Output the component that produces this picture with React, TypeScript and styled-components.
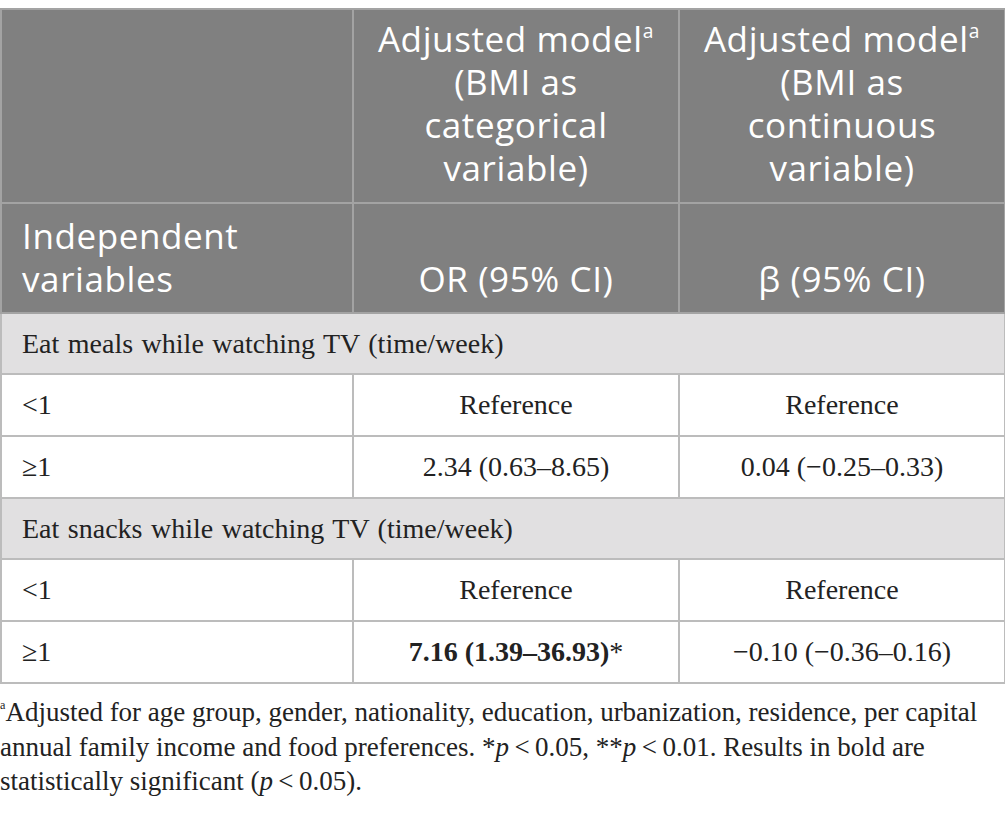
import styled, { createGlobalStyle } from 'styled-components';

const GlobalStyle = createGlobalStyle`
    body {
        margin: 0;
        padding-top: 8px;
        background: #ffffff;
    }
`

const Page = styled.div`
    width: 1005px;
`

const Table = styled.table`
    width: 1004px;
    border-collapse: collapse;
    table-layout: fixed;
`

const HeadCell = styled.th<{ $align?: string; $valign?: string; $height: number }>`
    height: ${p => p.$height}px;
    box-sizing: border-box;
    background: #808080;
    color: #ffffff;
    font-family: "Open Sans", "Liberation Sans", sans-serif;
    font-weight: 400;
    font-size: 35px;
    letter-spacing: 0.6px;
    line-height: 43px;
    text-align: ${p => p.$align || 'center'};
    vertical-align: ${p => p.$valign || 'middle'};
    padding: 6px 20px 12px 20px;
    border: 2px solid #a3a3a3;
`

const Sup = styled.sup`
    font-size: 0.55em;
    line-height: 0;
    vertical-align: 0.75em;
`

const SectionCell = styled.td`
    height: 61px;
    box-sizing: border-box;
    background: #e1e0e1;
    color: #222222;
    font-family: "Liberation Serif", serif;
    font-size: 28px;
    word-spacing: 1.5px;
    padding: 0 20px;
    border: 2px solid #bcbcbc;
    text-align: left;
`

const Cell = styled.td<{ $align?: string }>`
    height: 62px;
    box-sizing: border-box;
    background: #ffffff;
    color: #222222;
    font-family: "Liberation Serif", serif;
    font-size: 28px;
    padding: 0 20px;
    border: 2px solid #bcbcbc;
    text-align: ${p => p.$align || 'center'};
    vertical-align: middle;
`

const Bold = styled.b`
    font-weight: 700;
`

const Footnote = styled.p`
    margin: 11px 0 0 0;
    padding-right: 0;
    font-family: "Liberation Serif", serif;
    font-size: 27px;
    line-height: 34.5px;
    color: #222222;
`

const FootSup = styled.sup`
    font-size: 0.45em;
    line-height: 0;
    vertical-align: 0.95em;
`

type DataRow = { label: string; or: React.ReactNode; beta: string }

const sections: { title: string; rows: DataRow[] }[] = [
    {
        title: 'Eat meals while watching TV (time/week)',
        rows: [
            { label: '<1', or: 'Reference', beta: 'Reference' },
            { label: '≥1', or: '2.34 (0.63–8.65)', beta: '0.04 (−0.25–0.33)' },
        ],
    },
    {
        title: 'Eat snacks while watching TV (time/week)',
        rows: [
            { label: '<1', or: 'Reference', beta: 'Reference' },
            { label: '≥1', or: <><Bold>7.16 (1.39–36.93)</Bold>*</>, beta: '−0.10 (−0.36–0.16)' },
        ],
    },
]

const App = () => {
    return (
        <Page>
            <GlobalStyle />
            <Table>
                <colgroup>
                    <col style={{ width: 352 }} />
                    <col style={{ width: 326 }} />
                    <col style={{ width: 326 }} />
                </colgroup>
                <thead>
                    <tr>
                        <HeadCell $height={194} />
                        <HeadCell $height={194}>Adjusted model<Sup>a</Sup> (BMI as categorical variable)</HeadCell>
                        <HeadCell $height={194}>Adjusted model<Sup>a</Sup> (BMI as continuous variable)</HeadCell>
                    </tr>
                    <tr>
                        <HeadCell $height={110} $align="left" $valign="bottom">Independent variables</HeadCell>
                        <HeadCell $height={110} $valign="bottom">OR (95% CI)</HeadCell>
                        <HeadCell $height={110} $valign="bottom">β (95% CI)</HeadCell>
                    </tr>
                </thead>
                <tbody>
                    {sections.map(s => (
                        <>
                            <tr key={s.title}>
                                <SectionCell colSpan={3}>{s.title}</SectionCell>
                            </tr>
                            {s.rows.map((r, i) => (
                                <tr key={s.title + i}>
                                    <Cell $align="left">{r.label}</Cell>
                                    <Cell>{r.or}</Cell>
                                    <Cell>{r.beta}</Cell>
                                </tr>
                            ))}
                        </>
                    ))}
                </tbody>
            </Table>
            <Footnote>
                <FootSup>a</FootSup>Adjusted for age group, gender, nationality, education, urbanization, residence, per capital annual family income and food preferences. *<i>p</i>&thinsp;&lt;&thinsp;0.05, **<i>p</i>&thinsp;&lt;&thinsp;0.01. Results in bold are statistically significant (<i>p</i>&thinsp;&lt;&thinsp;0.05).
            </Footnote>
        </Page>
    )
}

export default App
